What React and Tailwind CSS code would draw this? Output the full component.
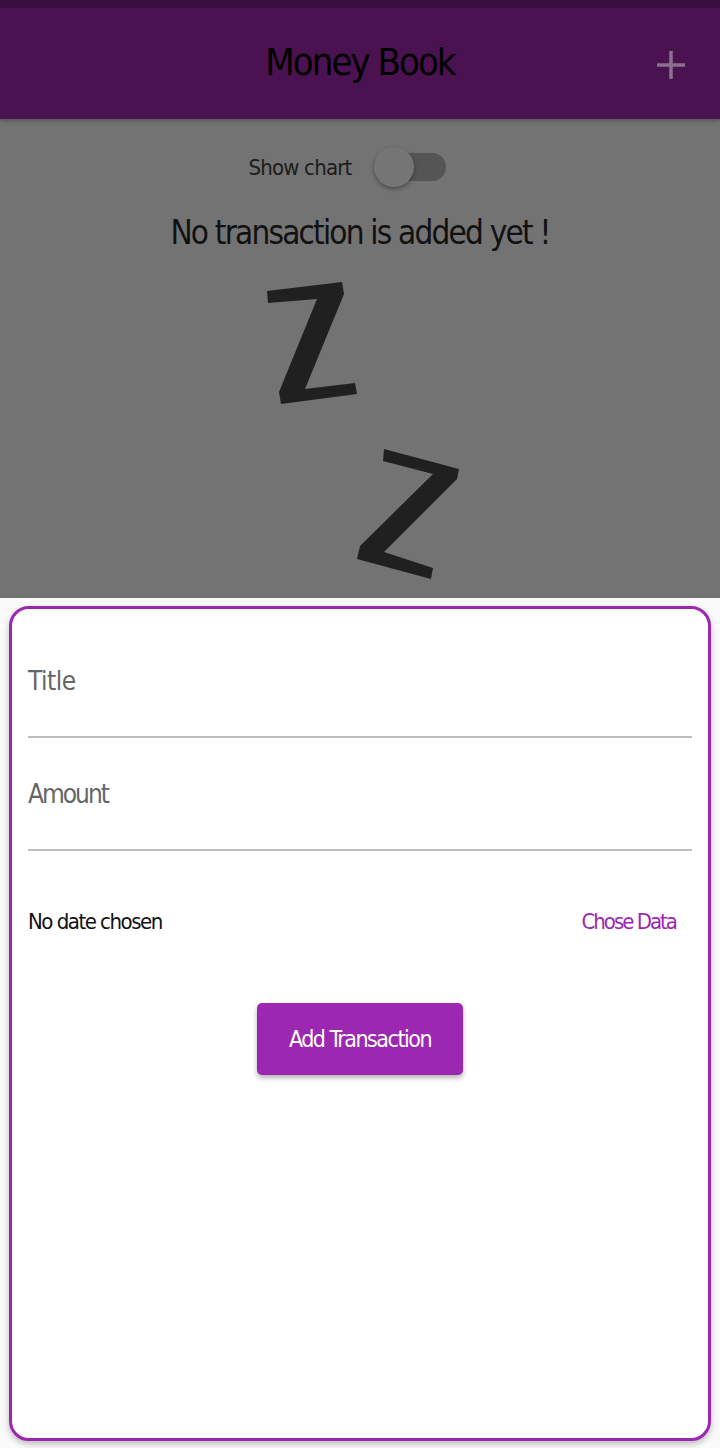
import React from "react";

function Sleep() {
  return (
    <svg width="280" height="330" viewBox="-20 0 280 330" className="block">
      <polygon
        fill="#202020"
        points="27,25 102,16 104,28 65,123 115,117 117,128 41,138 39,126 77,33 28,37"
      />
      <polygon
        fill="#202020"
        points="144,183 219,203 217,213 144,286 193,302 191,313 117,293 120,280 193,208 143,195"
      />
    </svg>
  );
}

export default function App() {
  return (
    <div className="w-[720px] h-[1448px] bg-[#fafafa] flex flex-col overflow-hidden font-['DejaVu_Sans',sans-serif] font-stretch-condensed">
      <div className="h-[8px] bg-[#3a0f3e]" />
      <header className="h-[111px] bg-[#4a1250] flex items-center justify-center relative shadow-[0_2px_4px_rgba(0,0,0,0.25)] z-10">
        <h1 className="text-[38px] text-black leading-none -mt-[4px] tracking-[-2px]">Money Book</h1>
        <svg className="absolute right-[34px] top-[42px]" width="30" height="30" viewBox="0 0 30 30">
          <path d="M15 1v28M1 15h28" stroke="#8a7190" strokeWidth="3.5" />
        </svg>
      </header>

      <main className="h-[479px] bg-[#737373] flex flex-col items-center">
        <div className="flex items-center gap-[22px] mt-[28px] ml-[-26px]">
          <span className="text-[22px] text-[#1c1c1c] tracking-[-0.8px]">Show chart</span>
          <div className="relative w-[72px] h-[40px] flex items-center">
            <div className="absolute left-[6px] right-0 h-[28px] rounded-full bg-[#555555]" />
            <div className="absolute left-0 w-[40px] h-[40px] rounded-full bg-[#757575] shadow-[0_2px_4px_rgba(0,0,0,0.35)]" />
          </div>
        </div>
        <p className="text-[33px] text-[#111] mt-[29px] leading-none tracking-[-1.8px]">No transaction is added yet !</p>
        <div className="mt-[17px]">
          <Sleep />
        </div>
      </main>

      <div className="flex-1 bg-[#fafafa] px-[9px] pt-[8px] pb-[7px] flex">
        <div className="flex-1 bg-white border-[3px] border-[#9c27b0] rounded-[20px] shadow-[0_3px_6px_rgba(0,0,0,0.25)] px-[16px] flex flex-col">
          <div className="mt-[59px] border-b-2 border-[#bdbdbd] pb-[39px]">
            <span className="text-[26px] text-[#666] leading-none tracking-[-0.5px]">Title</span>
          </div>
          <div className="mt-[43px] border-b-2 border-[#bdbdbd] pb-[39px]">
            <span className="text-[26px] text-[#666] leading-none tracking-[-2px]">Amount</span>
          </div>
          <div className="flex justify-between items-center mt-[54px] pr-[16px]">
            <span className="text-[22px] text-[#111] tracking-[-1.5px]">No date chosen</span>
            <span className="text-[22px] text-[#9c27b0] tracking-[-2px]">Chose Data</span>
          </div>
          <div className="flex justify-center mt-[65px]">
            <button className="w-[206px] h-[72px] bg-[#9c27b0] rounded-[5px] text-white text-[23px] tracking-[-1.5px] shadow-[0_3px_5px_rgba(0,0,0,0.3)]">
              Add Transaction
            </button>
          </div>
        </div>
      </div>
    </div>
  );
}
